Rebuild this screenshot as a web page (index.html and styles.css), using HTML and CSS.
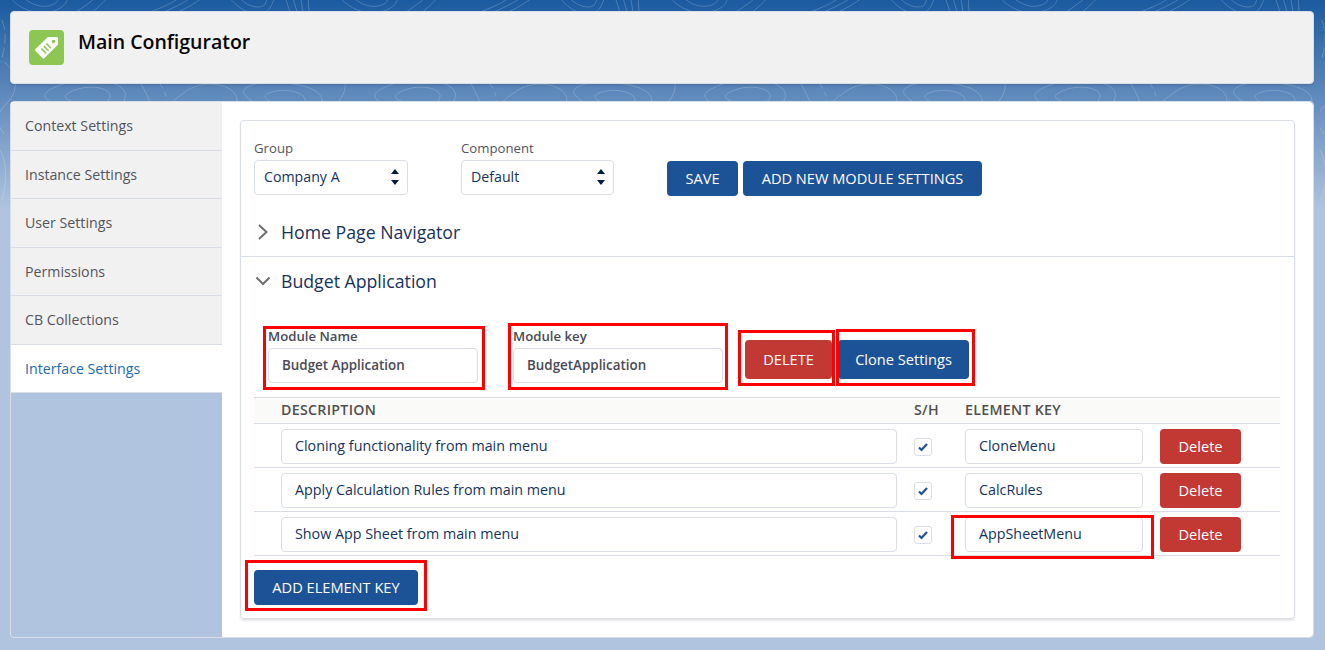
FILE: index.html
```html
<!DOCTYPE html>
<html lang="en">
<head>
    <meta charset="UTF-8">
    <title>Main Configurator</title>
    <link rel="stylesheet" href="styles.css">
</head>
<body>
    <div class="backdrop">
        <svg width="1325" height="210" xmlns="http://www.w3.org/2000/svg">
            <defs>
                <pattern id="contours" width="330" height="210" patternUnits="userSpaceOnUse">
                    <g fill="none" stroke="#fff" stroke-width="1">
                        <path d="M8 -6C14 6 34 16 50 12S66 2 70 -6"/>
                        <path d="M20 -6C26 2 38 8 48 6S58 0 60 -6"/>
                        <path d="M90 14C100 6 108 -2 112 -8"/>
                        <path d="M76 12C88 4 96 -2 102 -8"/>
                        <path d="M150 12C172 4 180 -2 186 -8"/>
                        <path d="M164 12C182 4 192 -2 198 -8"/>
                        <path d="M178 12C192 6 202 -2 210 -8"/>
                        <path d="M226 -6C236 6 246 14 258 14S272 4 276 -6"/>
                        <path d="M236 -6C242 2 250 7 258 7S266 2 268 -6"/>
                        <path d="M284 -6L290 12M292 -6L297 12M300 -6L303 12M308 -6L309 12"/>
                        <path d="M60 85C85 75 130 80 125 98S85 118 62 108S40 93 60 85Z"/>
                        <path d="M75 90C90 84 112 88 110 97S90 108 76 103S62 95 75 90Z"/>
                        <path d="M140 82C150 100 155 110 150 125"/>
                        <path d="M160 84C166 92 168 100 166 112" stroke-dasharray="5 4"/>
                        <path d="M185 92C200 80 230 82 236 96S215 118 190 110S172 102 185 92Z"/>
                        <path d="M255 84C280 80 320 84 322 100S280 120 262 108S235 90 255 84Z"/>
                        <path d="M272 92C285 88 305 92 305 100S285 110 274 104S262 95 272 92Z"/>
                        <path d="M4 62C16 70 20 90 8 102S-6 120 4 134"/>
                        <path d="M2 20C8 36 4 50 1 62" stroke-dasharray="10 4"/>
                        <path d="M0 150C6 162 8 176 2 200"/>
                    </g>
                </pattern>
            </defs>
            <rect width="1325" height="210" fill="url(#contours)"/>
        </svg>
    </div>

    <header class="page-header">
        <span class="app-icon">
            <svg viewBox="0 0 35 35" width="35" height="35" xmlns="http://www.w3.org/2000/svg">
                <path d="M19 7h8.500a1.500 1.500 0 0 1 1.500 1.500v5.500a1.600 1.600 0 0 1-.5 1.100L15.500 28.100a1.400 1.400 0 0 1-2 0L6.500 21.100a1.400 1.400 0 0 1 0-2z" fill="#fff"/>
                <circle cx="24.500" cy="11.500" r="1.800" fill="#8dc753"/>
                <path d="M12.400 18.600l4.600 4.600M14.900 16.100l4.600 4.600M17.400 13.600l4.600 4.600" stroke="#8dc753" stroke-width="1.500" fill="none"/>
            </svg>
        </span>
        <h1 class="page-title">Main Configurator</h1>
    </header>

    <div class="panel">
        <nav class="side-nav">
            <a class="nav-item">Context Settings</a>
            <a class="nav-item">Instance Settings</a>
            <a class="nav-item">User Settings</a>
            <a class="nav-item">Permissions</a>
            <a class="nav-item">CB Collections</a>
            <a class="nav-item active">Interface Settings</a>
        </nav>

        <main class="content">
            <div class="card">
                <div class="toolbar">
                    <div class="field field-group">
                        <label class="field-label">Group</label>
                        <div class="select">Company A<span class="arrows"></span></div>
                    </div>
                    <div class="field field-component">
                        <label class="field-label">Component</label>
                        <div class="select">Default<span class="arrows"></span></div>
                    </div>
                    <div class="toolbar-actions">
                        <button class="btn btn-blue btn-save">SAVE</button>
                        <button class="btn btn-blue btn-add-module">ADD NEW MODULE SETTINGS</button>
                    </div>
                </div>

                <div class="section section-closed">
                    <svg class="chevron" viewBox="0 0 16 16" width="16" height="16"><path d="M4 1l7.500 7-7.500 7" fill="none" stroke="#706e6b" stroke-width="2"/></svg>
                    <span class="section-title">Home Page Navigator</span>
                </div>
                <div class="section section-open">
                    <svg class="chevron" viewBox="0 0 16 16" width="16" height="16"><path d="M1.500 4.500l6.500 6.500 6.500-6.500" fill="none" stroke="#706e6b" stroke-width="2"/></svg>
                    <span class="section-title">Budget Application</span>
                </div>

                <div class="module-form">
                    <div class="module-field mark mark-name">
                        <label class="module-label">Module Name</label>
                        <input class="input input-bold" value="Budget Application">
                    </div>
                    <div class="module-field mark mark-key">
                        <label class="module-label">Module key</label>
                        <input class="input input-bold" value="BudgetApplication">
                    </div>
                    <button class="btn btn-red btn-delete mark mark-delete">DELETE</button>
                    <button class="btn btn-blue btn-clone mark mark-clone">Clone Settings</button>
                </div>

                <div class="keys">
                    <div class="keys-row keys-head">
                        <span class="col-desc">DESCRIPTION</span>
                        <span class="col-check">S/H</span>
                        <span class="col-key">ELEMENT KEY</span>
                    </div>
                    <div class="keys-row">
                        <div class="col-desc"><input class="input" value="Cloning functionality from main menu"></div>
                        <div class="col-check"><span class="checkbox"><svg viewBox="0 0 16 16" width="16" height="16"><path d="M4 8.500l2.500 2.500 5.500-6" fill="none" stroke="#1c5296" stroke-width="2.200"/></svg></span></div>
                        <div class="col-key"><input class="input" value="CloneMenu"></div>
                        <button class="btn btn-red btn-row">Delete</button>
                    </div>
                    <div class="keys-row">
                        <div class="col-desc"><input class="input" value="Apply Calculation Rules from main menu"></div>
                        <div class="col-check"><span class="checkbox"><svg viewBox="0 0 16 16" width="16" height="16"><path d="M4 8.500l2.500 2.500 5.500-6" fill="none" stroke="#1c5296" stroke-width="2.200"/></svg></span></div>
                        <div class="col-key"><input class="input" value="CalcRules"></div>
                        <button class="btn btn-red btn-row">Delete</button>
                    </div>
                    <div class="keys-row">
                        <div class="col-desc"><input class="input" value="Show App Sheet from main menu"></div>
                        <div class="col-check"><span class="checkbox"><svg viewBox="0 0 16 16" width="16" height="16"><path d="M4 8.500l2.500 2.500 5.500-6" fill="none" stroke="#1c5296" stroke-width="2.200"/></svg></span></div>
                        <div class="col-key mark mark-sheet"><input class="input" value="AppSheetMenu"></div>
                        <button class="btn btn-red btn-row">Delete</button>
                    </div>
                </div>

                <button class="btn btn-blue btn-add-key mark mark-add">ADD ELEMENT KEY</button>
            </div>
        </main>
    </div>
</body>
</html>
```

FILE: styles.css
```css
*{
    margin: 0;
    padding: 0;
    box-sizing: border-box;
}
html, body{
    height: 650px;
    overflow: hidden;
}
body{
    position: relative;
    padding: 11px 11px 0 10px;
    font-family: "Open Sans", "Noto Sans", sans-serif;
    font-size: 14.200px;
    color: #16325c;
    background: linear-gradient(#1b5a9f 0, #b0c4df 210px) no-repeat, #b0c4df;
}
.backdrop{
    position: absolute;
    top: 0;
    left: 0;
    opacity: .2;
}
.backdrop svg{
    display: block;
}

/* header */
.page-header{
    position: relative;
    height: 73px;
    padding: 18px 0 0 18px;
    display: flex;
    background: #f1f1f1;
    border: 1px solid #d8dde6;
    border-radius: 4px;
    box-shadow: 0 2px 2px rgba(0,0,0,.1);
}
.app-icon{
    width: 35px;
    height: 35px;
    background: #8dc753;
    border-radius: 4px;
}
.app-icon svg{
    display: block;
}
.page-title{
    margin: -2px 0 0 14px;
    font-size: 19.500px;
    font-weight: 600;
    line-height: 28px;
    color: #080707;
}

/* panel */
.panel{
    position: relative;
    height: 537px;
    margin-top: 17px;
    display: flex;
    border: 1px solid #d8dde6;
    border-radius: 4px;
}
.side-nav{
    width: 211px;
    flex-shrink: 0;
}
.nav-item{
    display: block;
    height: 48.500px;
    padding-left: 14px;
    line-height: 47px;
    color: #54545c;
    background: #f1f1f1;
    border-bottom: 1px solid #d8dde6;
}
.nav-item.active{
    color: #1c6ab0;
    background: #fff;
}
.content{
    flex: 1;
    padding: 18px;
    background: #fff;
    border-radius: 0 4px 4px 0;
}
.card{
    height: 499px;
    border: 1px solid #d8dde6;
    border-radius: 4px;
    box-shadow: 0 2px 2px rgba(0,0,0,.1);
}

/* top form */
.toolbar{
    display: flex;
    padding: 18px 0 0 13px;
    height: 100px;
}
.field-label{
    display: block;
    font-size: 13.200px;
    line-height: 18px;
    color: #54545c;
}
.field-group{
    width: 154px;
}
.field-component{
    width: 153px;
    margin-left: 53px;
}
.select{
    position: relative;
    height: 35px;
    margin-top: 3px;
    padding-left: 9px;
    line-height: 32px;
    background: #fff;
    border: 1px solid #d8dde6;
    border-radius: 4px;
}
.arrows{
    position: absolute;
    top: 8px;
    right: 8px;
    width: 8px;
    height: 16px;
}
.arrows::before, .arrows::after{
    content: "";
    position: absolute;
    left: 0;
    border-left: 4px solid transparent;
    border-right: 4px solid transparent;
}
.arrows::before{
    top: 0;
    border-bottom: 5px solid #061c3f;
}
.arrows::after{
    bottom: 0;
    border-top: 5px solid #061c3f;
}
.toolbar-actions{
    display: flex;
    gap: 5px;
    margin: 22px 0 0 53px;
}

/* buttons */
.btn{
    height: 35px;
    padding-bottom: 2px;
    font-family: inherit;
    font-size: 14.600px;
    color: #fff;
    border: 1px solid transparent;
    border-radius: 4px;
}
.btn-blue{
    background: #1c5296;
}
.btn-red{
    background: #c23934;
}
.btn-save{
    width: 71px;
}
.btn-add-module{
    width: 239px;
}
.btn-delete{
    width: 87px;
    height: 39px;
}
.btn-clone{
    width: 131px;
    height: 39px;
    margin: 35px 0 0 6px;
}
.btn-row{
    width: 81px;
    margin: 5px 0 0 17px;
}
.btn-add-key{
    width: 164px;
    margin: 14px 0 0 13px;
}

/* accordion */
.section{
    display: flex;
    align-items: center;
    padding-left: 14px;
}
.section-closed{
    height: 36px;
    padding-bottom: 14px;
    border-bottom: 1px solid #d8dde6;
}
.section-open{
    height: 48px;
}
.chevron{
    flex-shrink: 0;
}
.section-title{
    margin-left: 10px;
    font-size: 17.700px;
}

/* module form */
.module-form{
    display: flex;
    align-items: flex-start;
    height: 92px;
    padding-left: 27px;
}
.module-field{
    width: 210px;
    margin-right: 35px;
    padding-top: 23px;
}
.module-label{
    display: block;
    height: 20px;
    font-size: 13.200px;
    font-weight: 600;
    line-height: 17px;
    color: #4a4a56;
}
.input{
    display: block;
    width: 100%;
    height: 35px;
    padding: 0 0 2px 13px;
    font-family: inherit;
    font-size: 14.300px;
    color: #16325c;
    background: #fff;
    border: 1px solid #d8dde6;
    border-radius: 4px;
    outline: none;
}
.input-bold{
    font-weight: 600;
    font-size: 13.400px;
    color: #4a4a56;
}
.module-form .btn-delete{
    margin: 35px 0 0 -13px;
}

/* key table */
.keys{
    margin: 0 14px 0 13px;
}
.keys-row{
    display: flex;
    height: 44px;
    padding-left: 27px;
    border-bottom: 1px solid #d8dde6;
}
.keys-head{
    height: 27px;
    padding-bottom: 2px;
    align-items: center;
    font-size: 14.200px;
    font-weight: 600;
    letter-spacing: .3px;
    color: #514f4d;
    background: #fafaf9;
    border-top: 1px solid #dddbda;
}
.col-desc{
    width: 616px;
}
.col-check{
    width: 68px;
    padding-left: 17px;
}
.col-key{
    width: 178px;
}
.keys-row .col-desc, .keys-row .col-key, .keys-row .col-check{
    padding-top: 5px;
}
.keys-head .col-desc, .keys-head .col-key, .keys-head .col-check{
    padding-top: 0;
}
.checkbox{
    display: block;
    width: 18px;
    height: 18px;
    margin-top: 9px;
    background: #fff;
    border: 1px solid #d8dde6;
    border-radius: 3px;
}
.checkbox svg{
    display: block;
}

/* red annotation boxes drawn over the form */
.mark{
    position: relative;
    overflow: visible;
}
.mark::after{
    content: "";
    box-sizing: border-box;
    position: absolute;
    border: 3px solid #f00;
    pointer-events: none;
}
.mark-name::after{
    top: 21px;
    left: -5px;
    width: 222px;
    height: 64px;
}
.mark-key::after{
    top: 18px;
    left: -5px;
    width: 220px;
    height: 67px;
}
.mark-delete::after{
    top: -11px;
    left: -8px;
    width: 97px;
    height: 56px;
}
.mark-clone::after{
    top: -12px;
    left: -3px;
    width: 139px;
    height: 57px;
}
.mark-sheet::after{
    top: 3px;
    left: -14px;
    width: 203px;
    height: 44px;
}
.mark-add::after{
    top: -11px;
    left: -10px;
    width: 182px;
    height: 51px;
}
```
